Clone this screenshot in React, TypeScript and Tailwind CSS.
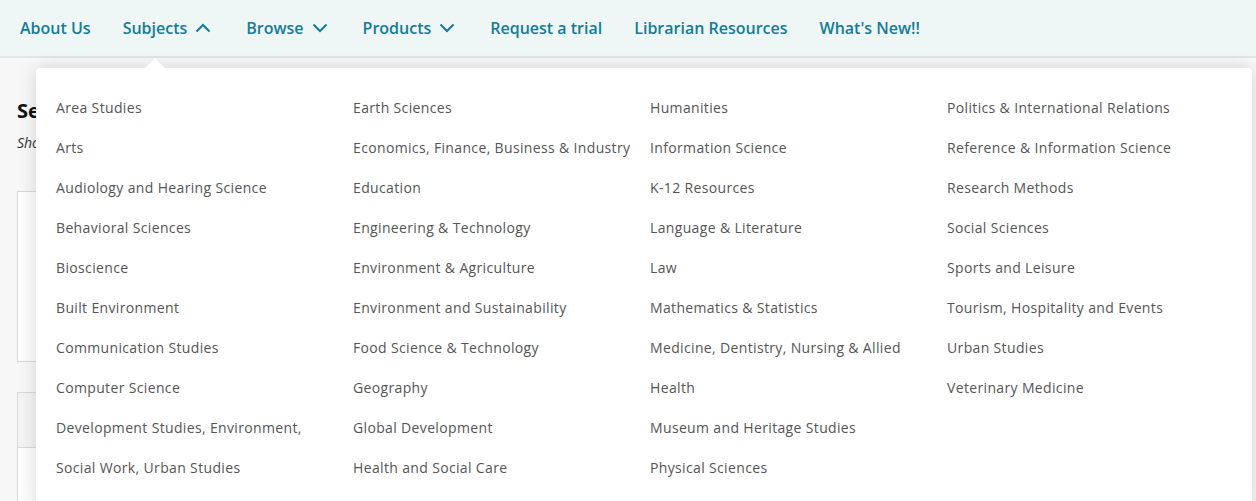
import React from "react";

const columns = [
  [
    "Area Studies",
    "Arts",
    "Audiology and Hearing Science",
    "Behavioral Sciences",
    "Bioscience",
    "Built Environment",
    "Communication Studies",
    "Computer Science",
    "Development Studies, Environment,",
    "Social Work, Urban Studies",
  ],
  [
    "Earth Sciences",
    "Economics, Finance, Business & Industry",
    "Education",
    "Engineering & Technology",
    "Environment & Agriculture",
    "Environment and Sustainability",
    "Food Science & Technology",
    "Geography",
    "Global Development",
    "Health and Social Care",
  ],
  [
    "Humanities",
    "Information Science",
    "K-12 Resources",
    "Language & Literature",
    "Law",
    "Mathematics & Statistics",
    "Medicine, Dentistry, Nursing & Allied",
    "Health",
    "Museum and Heritage Studies",
    "Physical Sciences",
  ],
  [
    "Politics & International Relations",
    "Reference & Information Science",
    "Research Methods",
    "Social Sciences",
    "Sports and Leisure",
    "Tourism, Hospitality and Events",
    "Urban Studies",
    "Veterinary Medicine",
  ],
];

function Chevron({ up }: { up?: boolean }) {
  return (
    <svg width="16" height="10" viewBox="0 0 16 10" className="ml-2 mr-[3px]">
      <polyline
        points={up ? "1.5,8.5 8,2 14.5,8.5" : "1.5,1.5 8,8 14.5,1.5"}
        fill="none"
        stroke="currentColor"
        strokeWidth="2"
      />
    </svg>
  );
}

export default function App() {
  const navItems = [
    { label: "About Us" },
    { label: "Subjects", chevron: "up" },
    { label: "Browse", chevron: "down" },
    { label: "Products", chevron: "down" },
    { label: "Request a trial" },
    { label: "Librarian Resources" },
    { label: "What's New!!" },
  ];

  return (
    <div
      className="relative h-[501px] w-[1256px] overflow-hidden bg-[#f7f7f7]"
      style={{ fontFamily: '"Open Sans", sans-serif' }}
    >
      {/* Top navigation */}
      <nav className="flex h-[58px] items-center gap-[32px] border-b-2 border-[#e3e6e6] bg-[#eff6f6] pb-[1px] pl-[20px] text-[16px] font-semibold text-[#137c97]">
        {navItems.map((item) => (
          <div key={item.label} className="flex items-center">
            <span>{item.label}</span>
            {item.chevron && <Chevron up={item.chevron === "up"} />}
          </div>
        ))}
      </nav>

      {/* Page behind the menu */}
      <div className="px-[17px] pt-[42px]">
        <h2 className="text-[20px] font-bold leading-[22px] text-[#111]">Search Results</h2>
        <p className="mt-[10px] text-[14px] italic text-[#333]">Showing results</p>
        <div className="mt-[38px] h-[171px] border border-[#d8d8d8] bg-[#fdfdfd]" />
        <div className="mt-[30px] h-[56px] border border-[#d8d8d8] bg-[#f4f4f4]" />
        <div className="h-[60px] border border-t-0 border-[#d8d8d8] bg-[#fdfdfd]" />
      </div>

      {/* Subjects dropdown */}
      <div className="absolute left-[36px] top-[68px] w-[1216px] rounded-[4px] bg-white pb-[20px] pl-[20px] pt-[19px] shadow-[0_0_18px_rgba(0,0,0,0.14)]">
        <div className="absolute left-[109px] top-[-10px] h-0 w-0 border-x-[10px] border-b-[10px] border-x-transparent border-b-white" />
        <div className="grid grid-cols-[297px_297px_297px_297px]">
          {columns.map((col, i) => (
            <ul key={i}>
              {col.map((s) => (
                <li
                  key={s}
                  className="flex h-[40px] items-center text-[14px] tracking-[0.35px] text-[#555]"
                >
                  {s}
                </li>
              ))}
            </ul>
          ))}
        </div>
      </div>
    </div>
  );
}
